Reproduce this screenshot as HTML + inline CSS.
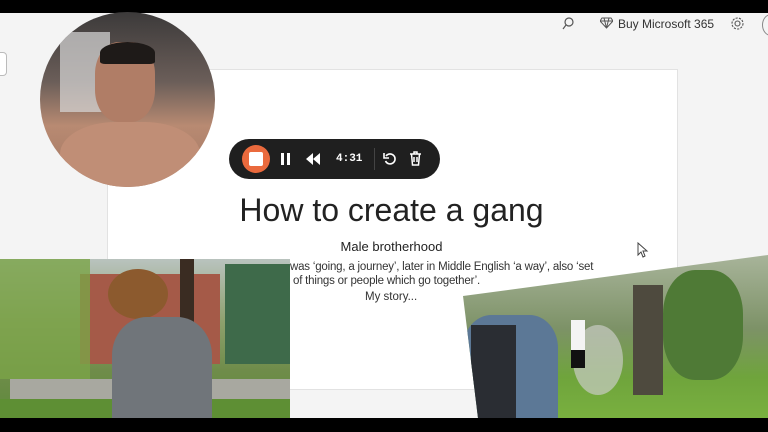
<!DOCTYPE html><html><head><style>
body{margin:0;width:768px;height:432px;overflow:hidden;background:#f4f4f4;font-family:"Liberation Sans",sans-serif;position:relative}
.a{position:absolute}
</style></head><body>
<div class="a" style="left:0;top:0;width:768px;height:13px;background:#000"></div>
<div class="a" style="left:0;top:418px;width:768px;height:14px;background:#000"></div>
<div class="a" style="left:0;top:52px;width:6px;height:22px;border:1px solid #bbb;border-left:none;border-radius:0 4px 4px 0;background:#fff"></div>
<svg class="a" style="left:561px;top:16px" width="14" height="14"><circle cx="8" cy="6" r="4" fill="none" stroke="#555" stroke-width="1.2"/><line x1="5" y1="9" x2="2" y2="13" stroke="#555" stroke-width="1.2"/></svg>
<svg class="a" style="left:600px;top:17px" width="13" height="12"><path d="M2 1h9l2 3-6.5 7L0 4z M0 4h13 M4 1l2.5 10L9 1" fill="none" stroke="#555" stroke-width="1"/></svg>
<div class="a" style="left:618px;top:17px;font-size:12px;color:#333">Buy Microsoft 365</div>
<svg class="a" style="left:730px;top:16px" width="15" height="15"><circle cx="7.5" cy="7.5" r="2.5" fill="none" stroke="#555" stroke-width="1.1"/><circle cx="7.5" cy="7.5" r="5.5" fill="none" stroke="#555" stroke-width="1.1" stroke-dasharray="2.2 1.2"/></svg>
<div class="a" style="left:762px;top:14px;width:16px;height:20px;border:1px solid #888;border-radius:50%"></div>
<div class="a" style="left:107px;top:69px;width:569px;height:319px;background:#fff;border:1px solid #e2e2e2"></div>
<div class="a" style="left:107px;top:192px;width:569px;text-align:center;font-size:32px;color:#222">How to create a gang</div>
<div class="a" style="left:107px;top:239px;width:569px;text-align:center;font-size:13px;color:#222">Male brotherhood</div>
<div class="a" style="left:290px;top:260px;font-size:11.5px;color:#333;line-height:14px;letter-spacing:-0.2px">was ‘going, a journey’, later in Middle English ‘a way’, also ‘set<br>&nbsp;of things or people which go together’.</div>
<div class="a" style="left:365px;top:291px;font-size:11.5px;color:#333">My story...</div>
<svg class="a" style="left:637px;top:242px" width="12" height="16"><path d="M1 1v12l3-3 2 5 2-1-2-5h4z" fill="#fff" stroke="#444"/></svg>
<div class="a" style="left:40px;top:12px;width:175px;height:175px;border-radius:50%;overflow:hidden;background:linear-gradient(180deg,#3c3a3a 0%,#6b5e59 40%,#b88a72 65%,#a27662 100%)">
 <div class="a" style="left:20px;top:20px;width:50px;height:80px;background:#d8d8d8;opacity:.7"></div>
 <div class="a" style="left:55px;top:30px;width:60px;height:80px;border-radius:40%;background:#b07d66"></div>
 <div class="a" style="left:60px;top:30px;width:55px;height:22px;border-radius:50% 50% 10% 10%;background:#1e1a18"></div>
 <div class="a" style="left:20px;top:110px;width:140px;height:80px;border-radius:40% 40% 0 0;background:#c08e76"></div>
</div>
<div class="a" style="left:229px;top:139px;width:211px;height:40px;border-radius:20px;background:#1f1f1f"></div>
<div class="a" style="left:242px;top:145px;width:28px;height:28px;border-radius:50%;background:#ea6a3d"></div>
<div class="a" style="left:249px;top:152px;width:14px;height:14px;border-radius:2px;background:#fff"></div>
<div class="a" style="left:281px;top:153px;width:3px;height:12px;background:#fff"></div><div class="a" style="left:287px;top:153px;width:3px;height:12px;background:#fff"></div>
<svg class="a" style="left:306px;top:153px" width="14" height="12"><path d="M7 0v12L0 6z M14 0v12L7 6z" fill="#fff"/></svg>
<div class="a" style="left:336px;top:153px;font-family:'Liberation Mono',monospace;font-weight:bold;font-size:11px;color:#fff">4:31</div>
<div class="a" style="left:374px;top:148px;width:1px;height:22px;background:#444"></div>
<svg class="a" style="left:383px;top:152px" width="14" height="14"><path d="M3 4a5 5 0 1 1-0.5 5" fill="none" stroke="#fff" stroke-width="1.6"/><path d="M1 1v5h5" fill="none" stroke="#fff" stroke-width="1.6"/></svg>
<svg class="a" style="left:409px;top:151px" width="13" height="15"><path d="M1 3h11M5 3V1h3v2M2.5 3l1 11h6l1-11M5 6v5M8 6v5" fill="none" stroke="#fff" stroke-width="1.5"/></svg>
<div class="a" style="left:0;top:259px;width:290px;height:159px;overflow:hidden;background:linear-gradient(180deg,#b9c3be 0%,#8da06c 40%,#6f8c4a 70%,#5f8a3c 100%)">
 <div class="a" style="left:80px;top:15px;width:140px;height:90px;background:#a55a48"></div>
 <div class="a" style="left:225px;top:5px;width:65px;height:100px;background:#3e6a4a"></div>
 <div class="a" style="left:0;top:0;width:90px;height:120px;background:#7aa447;opacity:.8"></div>
 <div class="a" style="left:180px;top:0;width:14px;height:120px;background:#3a2c22"></div>
 <div class="a" style="left:10px;top:120px;width:280px;height:20px;background:#a8a8a0"></div>
 <div class="a" style="left:0;top:140px;width:290px;height:20px;background:#5e8f34"></div>
 <div class="a" style="left:108px;top:10px;width:60px;height:50px;border-radius:50%;background:#8c5a2e"></div>
 <div class="a" style="left:112px;top:58px;width:100px;height:110px;border-radius:35% 35% 0 0;background:#70757a"></div>
</div>
<div class="a" style="left:463px;top:255px;width:305px;height:163px;clip-path:polygon(0 41px,305px 0,305px 163px,15px 163px);background:linear-gradient(180deg,#a8b49a 0%,#7d9267 45%,#6fa43c 75%,#79b03f 100%)">
 <div class="a" style="left:170px;top:30px;width:30px;height:110px;background:#4e4a3e"></div>
 <div class="a" style="left:200px;top:15px;width:80px;height:110px;border-radius:40%;background:#4f7a36"></div>
 <div class="a" style="left:110px;top:70px;width:50px;height:70px;border-radius:50%;background:#c9ccc4;opacity:.7"></div>
 <div class="a" style="left:108px;top:65px;width:14px;height:30px;background:#f4f4f4"></div>
 <div class="a" style="left:108px;top:95px;width:14px;height:18px;background:#111"></div>
 <div class="a" style="left:0;top:60px;width:95px;height:110px;border-radius:30% 30% 0 0;background:#5c7896"></div>
 <div class="a" style="left:8px;top:70px;width:45px;height:100px;background:#2a2d33"></div>
</div>
</body></html>
